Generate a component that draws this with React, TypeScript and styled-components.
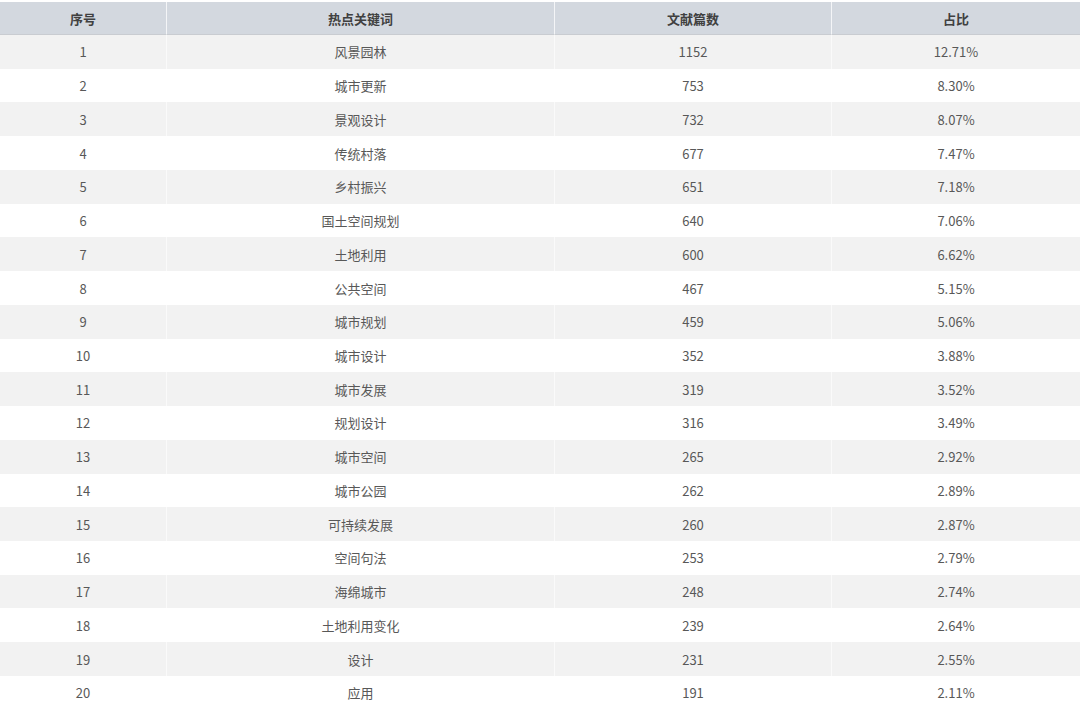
import React from "react";
import styled, { createGlobalStyle } from "styled-components";

const Global = createGlobalStyle`
  html, body { margin: 0; padding: 0; background: #ffffff; }
  body { font-family: "Microsoft YaHei", "Noto Sans CJK SC", "Noto Sans", sans-serif; }
`;

const Table = styled.div`
  margin-top: 2px;
  width: 1080px;
  display: grid;
  grid-template-columns: 166px 388px 277px 249px;
`;

const HeadCell = styled.div<{ $first?: boolean }>`
  height: 32px;
  display: flex;
  align-items: center;
  justify-content: center;
  background: #d3d8df;
  border-left: ${(p) => (p.$first ? "none" : "1.5px solid #f4f5f7")};
  border-bottom: 1px solid #c9ccd1;
  font-size: 13px;
  font-weight: 700;
  color: #404040;
`;

const Cell = styled.div<{ $odd: boolean; $first?: boolean }>`
  height: 33.74px;
  display: flex;
  align-items: center;
  justify-content: center;
  background: ${(p) => (p.$odd ? "#f2f2f2" : "#ffffff")};
  border-left: ${(p) => (p.$first ? "none" : p.$odd ? "1.5px solid #fafafa" : "1.5px solid #ffffff")};
  font-size: 13px;
  color: #585858;
`;

const rows: [string, string, string][] = [
  ["风景园林", "1152", "12.71%"],
  ["城市更新", "753", "8.30%"],
  ["景观设计", "732", "8.07%"],
  ["传统村落", "677", "7.47%"],
  ["乡村振兴", "651", "7.18%"],
  ["国土空间规划", "640", "7.06%"],
  ["土地利用", "600", "6.62%"],
  ["公共空间", "467", "5.15%"],
  ["城市规划", "459", "5.06%"],
  ["城市设计", "352", "3.88%"],
  ["城市发展", "319", "3.52%"],
  ["规划设计", "316", "3.49%"],
  ["城市空间", "265", "2.92%"],
  ["城市公园", "262", "2.89%"],
  ["可持续发展", "260", "2.87%"],
  ["空间句法", "253", "2.79%"],
  ["海绵城市", "248", "2.74%"],
  ["土地利用变化", "239", "2.64%"],
  ["设计", "231", "2.55%"],
  ["应用", "191", "2.11%"],
];

export default function App() {
  return (
    <>
      <Global />
      <Table>
        <HeadCell $first>序号</HeadCell>
        <HeadCell>热点关键词</HeadCell>
        <HeadCell>文献篇数</HeadCell>
        <HeadCell>占比</HeadCell>
        {rows.map((r, i) => {
          const odd = i % 2 === 0;
          return (
            <React.Fragment key={i}>
              <Cell $odd={odd} $first>{i + 1}</Cell>
              <Cell $odd={odd}>{r[0]}</Cell>
              <Cell $odd={odd}>{r[1]}</Cell>
              <Cell $odd={odd}>{r[2]}</Cell>
            </React.Fragment>
          );
        })}
      </Table>
    </>
  );
}
